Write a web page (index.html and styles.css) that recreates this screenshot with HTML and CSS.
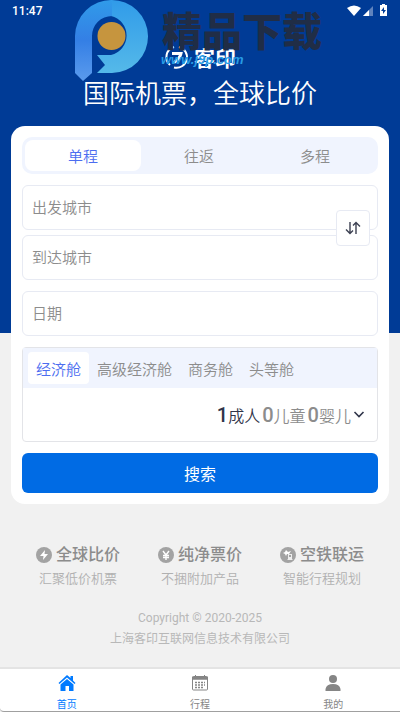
FILE: index.html
```
<!DOCTYPE html>
<html lang="zh-CN">
<head>
    <meta charset="UTF-8">
    <meta name="viewport" content="width=device-width, initial-scale=1.0">
    <title>客印 国际机票</title>
    <link rel="stylesheet" href="styles.css">
</head>
<body>
    <div class="app">
        <header class="hero">
            <div class="status">
                <span class="time">11:47</span>
                <svg class="status-icons" width="42" height="14" viewBox="0 0 42 14">
                    <path d="M1 4Q8 -1 15 4L8 12Z" fill="#fff"/>
                    <path d="M27 2V12H17Z" fill="#5f83bd"/>
                    <path d="M23 6V12H17Z" fill="#fff"/>
                    <path d="M36 0h3v1h2v11h-7V1h2z" fill="#fff"/>
                    <path d="M38 3l-3 4h2v3l3-4h-2z" fill="#003b96"/>
                </svg>
            </div>
            <div class="brand">
                <svg width="26" height="26" viewBox="0 0 26 26" fill="none" stroke="#fff" stroke-width="2">
                    <path d="M10 3A10.500 10.500 0 0 0 6 21M10 23.500A10.500 10.500 0 0 0 15 3"/>
                    <path d="M8 9.500h9q-1 5-7 9" stroke-width="3"/>
                </svg>
                <span>客印</span>
            </div>
            <h1>国际机票，全球比价</h1>
            <!-- 水印 -->
            <div class="watermark">
                <svg class="mark-logo" width="74" height="82" viewBox="0 0 74 82">
                    <defs>
                        <linearGradient id="ring" x1="0" y1="0" x2="0" y2="1">
                            <stop offset="0" stop-color="#309be9"/>
                            <stop offset="1" stop-color="#55b9e9"/>
                        </linearGradient>
                        <linearGradient id="stem" x1="0" y1="0" x2="0" y2="1">
                            <stop offset="0" stop-color="#309be9"/>
                            <stop offset=".5" stop-color="#347fe5"/>
                            <stop offset="1" stop-color="#5b9bed"/>
                        </linearGradient>
                    </defs>
                    <path d="M36 0A36.500 36.500 0 0 1 37 73H22L30 65L22 55H36A20 20 0 0 0 36 16Z" fill="url(#ring)"/>
                    <path d="M37 0A36.500 36.500 0 0 0 0 36V73L8 81L17 73V36A20 20 0 0 1 37 16Z" fill="url(#stem)"/>
                    <circle cx="36.500" cy="36" r="14" fill="#c6953e"/>
                </svg>
                <span class="mark-name">精品下载</span>
                <span class="mark-url">www.j9p.com</span>
            </div>
        </header>

        <main>
            <form class="card">
                <div class="trip">
                    <button type="button" class="active">单程</button>
                    <button type="button">往返</button>
                    <button type="button">多程</button>
                </div>
                <div class="cities">
                    <input type="text" placeholder="出发城市" aria-label="出发城市">
                    <input type="text" placeholder="到达城市" aria-label="到达城市">
                    <button type="button" class="swap" aria-label="交换城市">
                        <svg width="16" height="14" viewBox="0 0 16 14" fill="none" stroke="#3c4052" stroke-width="1.4">
                            <path d="M5 1V12.5M1 8.5L5 12.5L8 9.5M11 13V1.5M8 4.5L11 1.5L15 5.5"/>
                        </svg>
                    </button>
                </div>
                <input type="text" placeholder="日期" aria-label="日期">
                <div class="cabin">
                    <div class="cabin-tabs">
                        <button type="button" class="active">经济舱</button>
                        <button type="button">高级经济舱</button>
                        <button type="button">商务舱</button>
                        <button type="button">头等舱</button>
                    </div>
                    <button type="button" class="people">
                        <span class="adult"><b>1</b>成人</span>
                        <span><b>0</b>儿童</span>
                        <span><b>0</b>婴儿</span>
                        <svg width="12" height="8" viewBox="0 0 12 8" fill="none" stroke="#30354a" stroke-width="1.6">
                            <path d="M1.5 1L6 5.500L10.500 1"/>
                        </svg>
                    </button>
                </div>
                <button type="submit" class="search">搜索</button>
            </form>

            <ul class="features">
                <li>
                    <h2>
                        <svg width="16" height="16" viewBox="0 0 16 16">
                            <circle cx="8" cy="8" r="8" fill="#a3a3a3"/>
                            <path d="M9 3L4 9h3.500L7 13l5-6H8.500z" fill="#fff"/>
                        </svg>
                        全球比价
                    </h2>
                    <p>汇聚低价机票</p>
                </li>
                <li>
                    <h2>
                        <svg width="16" height="16" viewBox="0 0 16 16">
                            <circle cx="8" cy="8" r="8" fill="#a3a3a3"/>
                            <path d="M5 4l3 4l3-4M8 8v5M5 8.500h6M5 10.500h6" fill="none" stroke="#fff" stroke-width="1.400"/>
                        </svg>
                        纯净票价
                    </h2>
                    <p>不捆附加产品</p>
                </li>
                <li>
                    <h2>
                        <svg width="16" height="16" viewBox="0 0 16 16">
                            <circle cx="8" cy="8" r="8" fill="#a3a3a3"/>
                            <path d="M3 6l2-1 1-2 2 2 3-1-2 3-2 0-1 2-1-2z" fill="#fff"/>
                            <path d="M8 7h4v5l1 1H7l1-1z" fill="#eee"/>
                            <path d="M9 8h2v2H9z" fill="#a3a3a3"/>
                        </svg>
                        空铁联运
                    </h2>
                    <p>智能行程规划</p>
                </li>
            </ul>
            <footer>
                <p>Copyright © 2020-2025</p>
                <p>上海客印互联网信息技术有限公司</p>
            </footer>
        </main>

        <nav class="tabbar">
            <a href="#" class="active">
                <svg width="18" height="18" viewBox="0 0 18 18" fill="currentColor">
                    <path d="M9 1L12.500 4V2H15V6.500L17.500 9L16.500 10L9 3.500L1.500 10L.5 9Z"/>
                    <path d="M9 5L15.500 10.500V17H11V12H7.500V17H2.500V10.500Z"/>
                </svg>
                首页
            </a>
            <a href="#">
                <svg width="18" height="18" viewBox="0 0 18 18" fill="none" stroke="currentColor">
                    <rect x="1.500" y="2.500" width="15" height="13.500" rx="1"/>
                    <path d="M1 3.500H17M1 5H17" stroke-width="1.500"/>
                    <path d="M4.500 1V4M13.500 1V4"/>
                    <path d="M4 8.500H14M4 11H14M4 13.500H12" stroke-width="1.500" stroke-dasharray="2 1"/>
                </svg>
                行程
            </a>
            <a href="#">
                <svg width="18" height="18" viewBox="0 0 18 18" fill="currentColor">
                    <circle cx="9" cy="5" r="4"/>
                    <path d="M1.500 17V15Q2.500 10 9 10T16.500 15V17Z"/>
                </svg>
                我的
            </a>
        </nav>
    </div>
</body>
</html>
```

FILE: styles.css
```
* {
box-sizing: border-box;
}

body {
margin: 0;
background: #f1f1f1;
color: #8c8c8c;
font-family: Roboto, "Noto Sans CJK SC", sans-serif;
}

h1, h2, p, ul {
margin: 0;
padding: 0;
}

ul {
list-style: none;
}

button {
padding: 0;
border: none;
background: none;
color: inherit;
font: inherit;
cursor: pointer;
}

svg {
display: block;
flex: none;
}

.app {
min-height: 100vh;
display: flex;
flex-direction: column;
}

/* 顶部 */
.hero {
position: relative;
padding-bottom: 222px;
margin-bottom: -207px;
background: #003b96;
color: #fff;
}

.status {
display: flex;
justify-content: space-between;
align-items: center;
height: 22px;
padding: 0 12px;
}

.time {
font-size: 12px;
font-weight: 500;
}

.brand {
display: flex;
justify-content: center;
align-items: center;
gap: 4px;
height: 26px;
margin-top: 22px;
font-size: 21px;
font-weight: 700;
}

.hero h1 {
margin-top: 7px;
font-size: 26px;
font-weight: 350;
line-height: 34px;
text-align: center;
}

.watermark {
position: absolute;
top: 0;
left: 75px;
}

.mark-name {
position: absolute;
top: 8px;
left: 87px;
color: #202d46;
font-size: 40px;
font-weight: 900;
line-height: 50px;
white-space: nowrap;
}

.mark-url {
position: absolute;
top: 52px;
left: 86px;
color: #279be5;
font-family: "Liberation Sans", sans-serif;
font-size: 13px;
font-weight: 700;
font-style: italic;
line-height: 16px;
}

/* 搜索卡片 */
main {
flex: 1;
position: relative;
}

.card {
display: flex;
flex-direction: column;
gap: 11px;
margin: 0 11px;
padding: 11px;
border-radius: 14px;
background: #fff;
font-size: 15px;
font-weight: 350;
}

.trip {
display: flex;
height: 37px;
padding: 3px 5px 3px 3px;
border-radius: 10px;
background: #f0f4fe;
}

.trip button {
flex: 1;
border-radius: 8px;
}

.trip .active,
.cabin-tabs .active {
background: #fff;
color: #4c6df0;
}

.cities {
position: relative;
display: flex;
flex-direction: column;
gap: 5px;
}

.card input {
width: 100%;
height: 45px;
padding: 0 9px;
border: 1px solid #e7eaf3;
border-radius: 6px;
background: #fff;
font: inherit;
}

.card input::placeholder {
color: #8c8c8c;
}

.swap {
position: absolute;
top: 25px;
right: 8px;
display: flex;
justify-content: center;
align-items: center;
width: 34px;
height: 36px;
border: 1px solid #e7eaf3;
border-radius: 4px;
background: #fff;
}

.cabin {
border: 1px solid #e3e4e8;
border-radius: 4px;
}

.cabin-tabs {
display: flex;
height: 40px;
padding: 4px 5px;
background: #f0f4fe;
}

.cabin-tabs button {
padding: 0 8px;
border-radius: 4px;
}

.people {
display: flex;
justify-content: flex-end;
align-items: center;
gap: 2px;
width: 100%;
height: 53px;
padding-right: 12px;
font-size: 16px;
}

.people b {
font-size: 20px;
font-weight: 500;
}

.people .adult {
color: #30354a;
}

.search {
height: 40px;
border-radius: 6px;
background: #006be4;
color: #fff;
font-size: 16px;
font-weight: 400;
}

/* 卖点 */
.features {
display: flex;
justify-content: space-between;
padding: 40px 36px 0;
text-align: center;
}

.features h2 {
display: flex;
align-items: center;
gap: 4px;
font-size: 16px;
font-weight: 500;
line-height: 22px;
}

.features p {
margin-top: 2px;
color: #b0b0b0;
font-size: 13px;
font-weight: 350;
line-height: 22px;
}

footer {
padding-top: 18px;
color: #b8b8b8;
font-size: 12px;
line-height: 21px;
text-align: center;
}

.tabbar {
display: flex;
height: 45px;
border-top: 2px solid #e4e4e4;
border-bottom: 1px solid #a0a0a0;
border-bottom-left-radius: 4px;
background: #fff;
}

.tabbar a {
flex: 1;
display: flex;
flex-direction: column;
align-items: center;
gap: 4px;
padding-top: 5px;
color: #858585;
font-size: 10px;
line-height: 18px;
text-decoration: none;
}

.tabbar .active {
color: #007aff;
}
```
